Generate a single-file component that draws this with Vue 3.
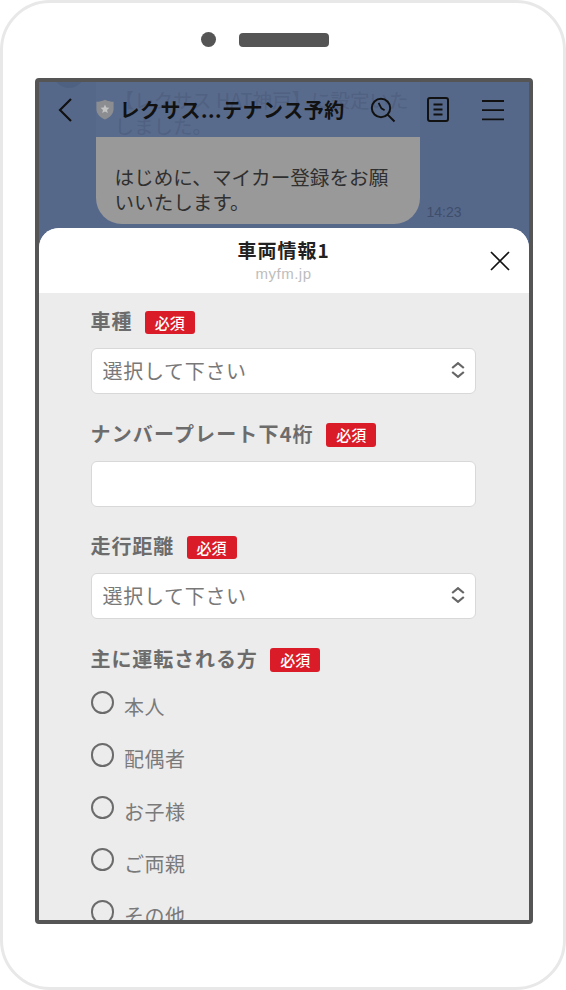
<script setup>
const fields = [
  { label: '車種', type: 'select' },
  { label: 'ナンバープレート下4桁', type: 'input', wide: true },
  { label: '走行距離', type: 'select' },
]
const options = ['本人', '配偶者', 'お子様', 'ご両親', 'その他']
</script>

<template>
  <div class="phone">
    <div class="top">
      <span class="camera"></span>
      <span class="speaker"></span>
    </div>
    <div class="screen">
      <div class="chat">
        <span class="avatar"></span>
        <div class="ghost">
          <p class="ghost-line">【レクサス HAT神戸】に設定いた</p>
          <p class="ghost-line">しました。</p>
        </div>
        <div class="bubble-row">
          <div class="bubble">はじめに、マイカー登録をお願いいたします。</div>
          <span class="time">14:23</span>
        </div>
        <header class="nav">
          <svg class="back" viewBox="0 0 16 26" width="16" height="26"><path d="M14 2 L3 13 L14 24" fill="none" stroke="#111" stroke-width="2.2"/></svg>
          <svg class="shield" viewBox="0 0 18 21" width="18" height="21">
            <path d="M9 .8 C12 2.2 15 2.8 17.6 2.8 V10 C17.6 15 13.5 18.6 9 20.4 C4.5 18.6 .4 15 .4 10 V2.8 C3 2.8 6 2.2 9 .8Z" fill="#8b8d91"/>
            <path d="M9 5.6 L10.3 8.5 L13.4 8.8 L11 10.9 L11.8 14 L9 12.4 L6.2 14 L7 10.9 L4.6 8.8 L7.7 8.5Z" fill="#c4c4c4"/>
          </svg>
          <span class="nav-title">レクサス...テナンス予約</span>
          <svg class="ic-search" viewBox="0 0 26 26" width="26" height="26" fill="none" stroke="#111" stroke-width="2">
            <circle cx="11" cy="11" r="9.2"/>
            <path d="M8.6 5.8 L11.4 11.4 L14.6 13.2" stroke-width="1.8"/>
            <path d="M17.6 17.6 L24.5 24.5"/>
          </svg>
          <svg class="ic-note" viewBox="0 0 22 25" width="22" height="25" fill="none" stroke="#111" stroke-width="2">
            <rect x="1" y="1" width="20" height="23" rx="2"/>
            <path d="M6.5 7.5 H15.5 M6.5 12.5 H15.5 M6.5 17.5 H15.5"/>
          </svg>
          <svg class="ic-menu" viewBox="0 0 22 22" width="22" height="22" fill="none" stroke="#111" stroke-width="1.8">
            <path d="M0 2 H22 M0 11.2 H22 M0 20.4 H22"/>
          </svg>
        </header>
      </div>

      <section class="modal">
        <div class="modal-head">
          <div class="modal-title">車両情報1</div>
          <div class="modal-host">myfm.jp</div>
          <svg class="close" viewBox="0 0 20 20" width="20" height="20"><path d="M1 1 L19 19 M19 1 L1 19" stroke="#111" stroke-width="1.7" fill="none"/></svg>
        </div>
        <div class="form">
          <div v-for="f in fields" :key="f.label" class="group">
            <div class="label-row">
              <span class="label" :class="{ wide: f.wide }">{{ f.label }}</span>
              <span class="badge">必須</span>
            </div>
            <div class="box">
              <template v-if="f.type === 'select'">
                <span class="placeholder">選択して下さい</span>
                <svg class="updown" viewBox="0 0 14 16" width="14" height="16" fill="none" stroke="#666" stroke-width="2.2"><path d="M1.2 6 L7 1.2 L12.8 6 M1.2 10 L7 14.8 L12.8 10"/></svg>
              </template>
            </div>
          </div>
          <div class="group">
            <div class="label-row">
              <span class="label">主に運転される方</span>
              <span class="badge">必須</span>
            </div>
            <div class="radios">
              <div v-for="o in options" :key="o" class="radio">
                <span class="dot"></span>
                <span class="radio-text">{{ o }}</span>
              </div>
            </div>
          </div>
        </div>
      </section>
    </div>
  </div>
</template>

<style>
html, body { margin: 0; background: #fff; }
</style>

<style scoped>
.phone {
  width: 566px;
  height: 990px;
  box-sizing: border-box;
  border: 3px solid #e8e8e8;
  border-radius: 50px;
  background: #fff;
  display: flex;
  flex-direction: column;
  align-items: center;
  font-family: "Noto Sans CJK JP", "Noto Sans", sans-serif;
  overflow: hidden;
}
.top {
  height: 75px;
  flex: none;
  width: 100%;
  box-sizing: border-box;
  padding: 29px 0 0 198px;
  display: flex;
  gap: 23px;
  align-items: flex-start;
}
.camera {
  width: 15px;
  height: 15px;
  border-radius: 50%;
  background: #555;
}
.speaker {
  width: 90px;
  height: 14px;
  margin-top: 1px;
  border-radius: 4px;
  background: #555;
}
.screen {
  width: 498px;
  height: 846px;
  box-sizing: border-box;
  margin-left: 1px;
  border: 4px solid #555;
  border-radius: 4px;
  display: flex;
  flex-direction: column;
  overflow: hidden;
  background: #56688a;
}
.chat {
  position: relative;
  height: 146px;
  flex: none;
  padding-left: 57px;
  box-sizing: border-box;
  overflow: hidden;
}
.avatar {
  position: absolute;
  left: 14px;
  top: -26px;
  width: 32px;
  height: 32px;
  border-radius: 50%;
  background: #4f6182;
}
.ghost {
  width: 324px;
  height: 55px;
  box-sizing: border-box;
  background: #596b8c;
  padding: 7px 0 0 19px;
  display: flex;
  flex-direction: column;
  gap: 4px;
}
.ghost-line {
  margin: 0;
  font-size: 19.5px;
  line-height: 22px;
  color: #506181;
  white-space: nowrap;
}
.bubble-row {
  display: flex;
  align-items: flex-end;
  gap: 7px;
}
.bubble {
  width: 324px;
  height: 87px;
  box-sizing: border-box;
  padding: 27px 19px 0;
  background: #999;
  border-radius: 0 0 26px 26px;
  font-size: 19.6px;
  line-height: 25px;
  color: #2f2f2f;
}
.time {
  font-size: 14px;
  line-height: 16px;
  color: #3f4e6a;
  font-family: "Liberation Sans", sans-serif;
  margin-bottom: 4px;
}
.nav {
  position: absolute;
  left: 0;
  right: 0;
  top: 0;
  height: 55px;
  display: flex;
  align-items: center;
}
.back { margin-left: 18px; }
.shield { margin-left: 23px; }
.nav-title {
  margin-left: 6px;
  width: 230px;
  font-size: 20px;
  font-weight: 700;
  letter-spacing: .5px;
  color: #111;
  white-space: nowrap;
}
.ic-search { margin-left: 20px; }
.ic-note { margin-left: 31px; }
.ic-menu { margin-left: 33px; }
.modal {
  flex: 1;
  min-height: 0;
  background: #ececec;
  border-radius: 20px 20px 0 0;
  overflow: hidden;
  display: flex;
  flex-direction: column;
}
.modal-head {
  position: relative;
  height: 65px;
  flex: none;
  background: #fff;
  text-align: center;
  padding-top: 9px;
  box-sizing: border-box;
}
.modal-title {
  font-size: 19px;
  font-weight: 700;
  line-height: 26px;
  color: #222;
  letter-spacing: 1px;
}
.modal-host {
  font-family: "Liberation Sans", sans-serif;
  font-size: 15px;
  letter-spacing: .5px;
  line-height: 18px;
  margin-top: 2px;
  color: #bdbdbd;
}
.close {
  position: absolute;
  right: 19px;
  top: 23px;
}
.form {
  padding: 17.6px 53px 0 52px;
  display: flex;
  flex-direction: column;
  gap: 29px;
}
.group {
  display: flex;
  flex-direction: column;
  gap: 14px;
}
.label-row {
  height: 23.5px;
  display: flex;
  align-items: center;
  gap: 12.5px;
}
.label {
  font-size: 20px;
  font-weight: 700;
  letter-spacing: .9px;
  line-height: 22px;
  margin-top: -2px;
  color: #6c6c6c;
  white-space: nowrap;
}
.label.wide { letter-spacing: 1.15px; }
.badge {
  width: 50px;
  height: 23.5px;
  border-radius: 3px;
  background: #d91c27;
  color: #fff;
  font-size: 15px;
  font-weight: 500;
  line-height: 23px;
  text-align: center;
}
.box {
  height: 46px;
  box-sizing: border-box;
  background: #fff;
  border: 1px solid #d8d8d8;
  border-radius: 6px;
  padding: 0 10px 0 11px;
  display: flex;
  align-items: center;
  justify-content: space-between;
}
.placeholder {
  font-size: 20px;
  letter-spacing: .7px;
  line-height: 44px;
  color: #787878;
}
.updown { margin-top: -2px; }
.radios {
  display: flex;
  flex-direction: column;
  gap: 28.9px;
  margin-top: 5.4px;
}
.radio {
  display: flex;
  gap: 10px;
  height: 23.4px;
}
.dot {
  width: 23.4px;
  height: 23.4px;
  box-sizing: border-box;
  border: 2.5px solid #6b6b6b;
  border-radius: 50%;
  flex: none;
}
.radio-text {
  font-size: 20px;
  letter-spacing: .5px;
  line-height: 32px;
  color: #7a7a7a;
}
</style>
